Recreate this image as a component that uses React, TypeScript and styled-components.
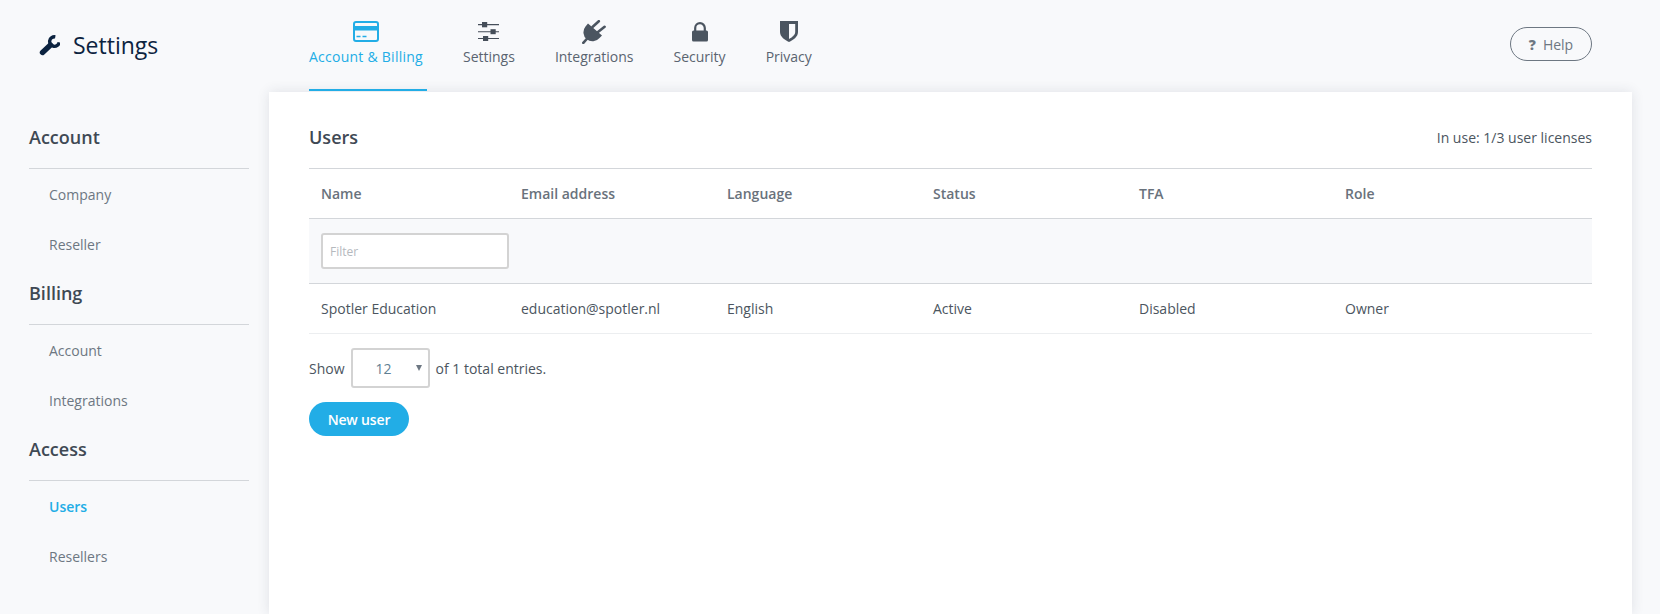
import React from 'react';
import styled, { createGlobalStyle } from 'styled-components';

const GlobalStyle = createGlobalStyle`
  html, body {
    margin: 0;
    height: 100%;
    overflow: hidden;
    background: #f8f9fb;
    font-family: "Open Sans", "Liberation Sans", sans-serif;
    font-size: 14px;
    color: #4b5560;
  }
  * { box-sizing: border-box; }
`;

const Page = styled.div`
  width: 1660px;
  height: 614px;
  display: flex;
  flex-direction: column;
`;

const Header = styled.header`
  height: 92px;
  display: flex;
  flex: none;
  padding-right: 68px;
`;

const Brand = styled.div`
  width: 309px;
  flex: none;
  padding-left: 39px;
  display: flex;
  align-items: center;
  gap: 13px;
  height: 90px;
  color: #0c2340;
  font-size: 23px;
`;

const Tabs = styled.nav`
  display: flex;
  gap: 40px;
  flex: 1;
`;

const Tab = styled.a<{ $active?: boolean }>`
  position: relative;
  height: 91px;
  display: flex;
  flex-direction: column;
  align-items: center;
  padding-top: 16px;
  font-size: 14px;
  line-height: 20px;
  letter-spacing: ${(p) => (p.$active ? '0.25px' : '0')};
  color: ${(p) => (p.$active ? '#22ade6' : '#5a6470')};
  ${(p) =>
    p.$active &&
    `&::after {
      content: '';
      position: absolute;
      left: 0;
      right: -4px;
      bottom: 0;
      height: 2px;
      background: #22ade6;
    }`}
`;

const TabIcon = styled.span`
  height: 31px;
  display: flex;
  align-items: center;
  justify-content: center;
`;

const HelpButton = styled.button`
  margin: 27px 0 0 auto;
  width: 82px;
  height: 34px;
  border: 1px solid #6d7782;
  border-radius: 17px;
  background: transparent;
  font: inherit;
  font-size: 14px;
  color: #6d7782;
  padding: 0;
  b {
    margin-right: 7px;
    font-size: 14px;
    font-weight: 800;
  }
`;

const Body = styled.div`
  display: flex;
  flex: 1;
  min-height: 0;
`;

const Sidebar = styled.aside`
  width: 269px;
  flex: none;
  padding: 21px 20px 0 29px;
`;

const SectionTitle = styled.h3`
  margin: 0;
  height: 56px;
  line-height: 48px;
  font-size: 18px;
  font-weight: 600;
  color: #3f4954;
  border-bottom: 1px solid #d3d6da;
`;

const SideLink = styled.a<{ $active?: boolean }>`
  display: block;
  height: 50px;
  line-height: 51px;
  padding-left: 20px;
  font-size: 14px;
  font-weight: ${(p) => (p.$active ? 600 : 400)};
  color: ${(p) => (p.$active ? '#22ade6' : '#6d7782')};
`;

const Card = styled.main`
  width: 1363px;
  flex: none;
  background: #fff;
  padding: 0 40px;
  box-shadow: 0 0 12px rgba(40, 50, 70, 0.12);
`;

const CardHead = styled.div`
  height: 77px;
  display: flex;
  align-items: center;
  justify-content: space-between;
  padding-top: 14px;
  border-bottom: 1px solid #d3d6da;
`;

const CardTitle = styled.h2`
  margin: 0;
  font-size: 18px;
  font-weight: 600;
  color: #3f4954;
`;

const Licenses = styled.span`
  font-size: 14px;
  color: #4b5560;
`;

const Table = styled.div`
  display: grid;
  grid-template-columns: 200px 206px 206px 206px 206px 1fr;
`;

const HeadCell = styled.div`
  height: 50px;
  display: flex;
  align-items: center;
  padding-left: 12px;
  font-weight: 600;
  font-size: 14px;
  color: #69727c;
  border-bottom: 1px solid #d3d6da;
`;

const FilterRow = styled.div`
  grid-column: 1 / -1;
  height: 65px;
  background: #f8f9fb;
  border-bottom: 1px solid #d3d6da;
  padding: 14px 0 0 12px;
`;

const FilterInput = styled.input`
  display: block;
  width: 188px;
  height: 36px;
  border: 2px solid #d3d3d3;
  border-radius: 3px;
  background: #fff;
  padding: 0 7px;
  font: inherit;
  font-size: 12px;
  &::placeholder {
    color: #b5b9be;
    opacity: 1;
  }
`;

const Cell = styled.div`
  height: 50px;
  display: flex;
  align-items: center;
  padding-left: 12px;
  font-size: 14px;
  color: #4b5560;
  border-bottom: 1px solid #eceef0;
`;

const Pager = styled.div`
  display: flex;
  align-items: center;
  gap: 6px;
  margin-top: 14px;
  height: 40px;
`;

const PageSelect = styled.div`
  width: 79px;
  height: 40px;
  border: 2px solid #d3d3d3;
  border-radius: 3px;
  display: flex;
  align-items: center;
  padding-left: 23px;
  color: #5f7f94;
  position: relative;
  &::after {
    content: '';
    position: absolute;
    right: 6px;
    top: 15px;
    border-left: 3px solid transparent;
    border-right: 3px solid transparent;
    border-top: 6px solid #6d7782;
  }
`;

const PrimaryButton = styled.button`
  display: block;
  margin-top: 14px;
  width: 100px;
  height: 34px;
  border: none;
  border-radius: 17px;
  background: #22ade6;
  color: #fff;
  font: inherit;
  font-size: 14px;
  font-weight: 600;
  letter-spacing: -0.15px;
  padding: 0;
`;

const CardIcon = () => (
  <svg width="26" height="21" viewBox="0 0 26 21">
    <rect x="1" y="1" width="24" height="19" rx="2" fill="none" stroke="#22ade6" strokeWidth="2" />
    <rect x="1" y="5" width="24" height="4.500" fill="#22ade6" />
    <path d="M3.500 15.500h4M9.500 15.500h4" stroke="#22ade6" strokeWidth="1.300" />
  </svg>
);

const SlidersIcon = () => (
  <svg width="21" height="19" viewBox="0 0 21 19" fill="#454e59">
    <path d="M0 2.100h21v1.100H0zM0 9.200h21v1.100H0zM0 16h21v1.100H0z" />
    <rect x="4" y="0" width="5.200" height="5.300" />
    <rect x="12.500" y="7.200" width="5.200" height="5" />
    <rect x="5" y="14" width="5.200" height="5" />
  </svg>
);

const PlugIcon = () => (
  <svg width="24" height="24" viewBox="0 0 24 24" fill="#4b5560" stroke="#4b5560" strokeLinecap="round">
    <path d="M6 3.500L20 15.500L17.500 18A9 9 0 0 1 3.500 6.500z" stroke="none" />
    <path d="M10.500 7L16.800 1.200M16 12.100L22.600 6.800" strokeWidth="2.600" />
    <path d="M6.500 17L1.300 22.800" strokeWidth="2.600" />
  </svg>
);

const LockIcon = () => (
  <svg width="16" height="20" viewBox="0 0 16 20">
    <path d="M3.200 9V6a4.800 4.800 0 0 1 9.600 0v3" fill="none" stroke="#4b5560" strokeWidth="2.200" />
    <rect x="0" y="8.500" width="16" height="11" rx="1.500" fill="#4b5560" />
  </svg>
);

const ShieldIcon = () => (
  <svg width="18" height="21" viewBox="0 0 18 21">
    <path d="M0 0h18v11c0 5-5 8-9 10-4-2-9-5-9-10z" fill="#4b5560" />
    <path d="M9 3h6.200v8c0 3-3.200 5.400-6.200 7z" fill="#f8f9fb" />
  </svg>
);

const WrenchIcon = () => (
  <svg width="21" height="21" viewBox="0 0 21 21" fill="none" stroke="#0c2340">
    <path d="M16.300 1.800A4.800 4.800 0 1 0 20.200 7.300" strokeWidth="3.400" />
    <path d="M3.500 17.500L11.500 10" strokeWidth="5.400" strokeLinecap="round" />
  </svg>
);

const tabs = [
  { label: 'Account & Billing', icon: <CardIcon />, active: true },
  { label: 'Settings', icon: <SlidersIcon /> },
  { label: 'Integrations', icon: <PlugIcon /> },
  { label: 'Security', icon: <LockIcon /> },
  { label: 'Privacy', icon: <ShieldIcon /> },
];

const menu = [
  { title: 'Account', links: ['Company', 'Reseller'] },
  { title: 'Billing', links: ['Account', 'Integrations'] },
  { title: 'Access', links: ['Users', 'Resellers'] },
];

const columns = ['Name', 'Email address', 'Language', 'Status', 'TFA', 'Role'];
const row = ['Spotler Education', 'education@spotler.nl', 'English', 'Active', 'Disabled', 'Owner'];

export default function App() {
  return (
    <Page>
      <GlobalStyle />
      <Header>
        <Brand>
          <WrenchIcon />
          Settings
        </Brand>
        <Tabs>
          {tabs.map((t) => (
            <Tab key={t.label} $active={t.active}>
              <TabIcon>{t.icon}</TabIcon>
              {t.label}
            </Tab>
          ))}
        </Tabs>
        <HelpButton>
          <b>?</b>Help
        </HelpButton>
      </Header>
      <Body>
        <Sidebar>
          {menu.map((m) => (
            <section key={m.title}>
              <SectionTitle>{m.title}</SectionTitle>
              {m.links.map((l) => (
                <SideLink key={l} $active={l === 'Users'}>
                  {l}
                </SideLink>
              ))}
            </section>
          ))}
        </Sidebar>
        <Card>
          <CardHead>
            <CardTitle>Users</CardTitle>
            <Licenses>In use: 1/3 user licenses</Licenses>
          </CardHead>
          <Table>
            {columns.map((c) => (
              <HeadCell key={c}>{c}</HeadCell>
            ))}
            <FilterRow>
              <FilterInput placeholder="Filter" />
            </FilterRow>
            {row.map((c) => (
              <Cell key={c}>{c}</Cell>
            ))}
          </Table>
          <Pager>
            Show
            <PageSelect>12</PageSelect>
            of 1 total entries.
          </Pager>
          <PrimaryButton>New user</PrimaryButton>
        </Card>
      </Body>
    </Page>
  );
}
